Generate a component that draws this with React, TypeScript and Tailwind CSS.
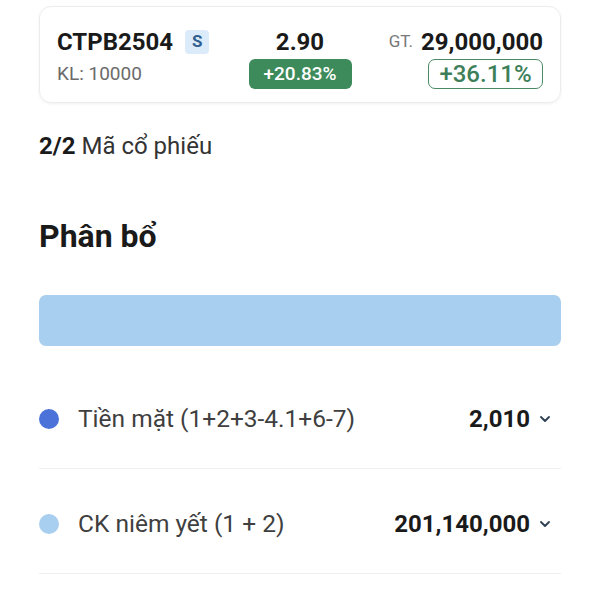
import React from "react";

const rows = [
  { label: "Tiền mặt (1+2+3-4.1+6-7)", value: "2,010", dot: "bg-[#4a72d8]" },
  { label: "CK niêm yết (1 + 2)", value: "201,140,000", dot: "bg-[#a9cff0]" },
];

function Chevron() {
  return (
    <svg width="12" height="8" viewBox="0 0 12 8" fill="none" className="ml-[9px] mr-[10px]">
      <path d="M2 2l4 4 4-4" stroke="#2c3e50" strokeWidth="1.8" strokeLinecap="round" strokeLinejoin="round" />
    </svg>
  );
}

export default function App() {
  return (
    <div className="w-[600px] h-[600px] bg-white overflow-hidden font-['Roboto',sans-serif] text-[#1a1a1a]">
      <div className="mx-[39px] mt-[6px] rounded-[12px] border border-[#ececec] shadow-[0_1px_3px_rgba(0,0,0,0.06)] px-[17px] pt-[22px] pb-[13px]">
        <div className="grid grid-cols-[1fr_auto_1fr] items-start">
          <div className="flex flex-col">
            <div className="flex items-center h-[26px]">
              <span className="text-[24px] font-bold leading-none">CTPB2504</span>
              <span className="ml-[12px] w-[24px] h-[24px] rounded-[4px] bg-[#dcebf9] text-[#2f5f8f] text-[17px] font-bold flex items-center justify-center">S</span>
            </div>
            <div className="mt-[4px] h-[30px] flex items-center text-[19px] text-[#6b6b6b]">KL: 10000</div>
          </div>
          <div className="flex flex-col items-center">
            <div className="h-[26px] flex items-center text-[24px] font-bold leading-none">2.90</div>
            <div className="mt-[4px] h-[30px] w-[103px] rounded-[6px] bg-[#3d8a5a] text-white text-[19px] font-medium flex items-center justify-center">+20.83%</div>
          </div>
          <div className="flex flex-col items-end">
            <div className="h-[26px] flex items-center">
              <span className="text-[17px] text-[#777]">GT.</span>
              <span className="ml-[8px] text-[24px] font-bold leading-none">29,000,000</span>
            </div>
            <div className="mt-[4px] h-[30px] w-[115px] rounded-[7px] border-[1.5px] border-[#4c8a66] text-[#3e7f5a] text-[24px] font-medium flex items-center justify-center">+36.11%</div>
          </div>
        </div>
      </div>

      <div className="px-[39px]">
        <div className="mt-[30px] h-[26px] flex items-center text-[24px] text-[#333]">
          <span className="font-bold text-[#1a1a1a]">2/2</span>
          <span className="ml-[6px]">Mã cổ phiếu</span>
        </div>

        <h2 className="mt-[60px] h-[34px] flex items-center text-[32px] font-bold">Phân bổ</h2>

        <div className="mt-[42px] h-[51px] rounded-[7px] bg-[#a9cff0]" />

        <div className="mt-[18px]">
          {rows.map((r) => (
            <div key={r.label} className="h-[105px] pt-[6px] flex items-center border-b border-[#efefef]">
              <span className={`w-[20px] h-[20px] rounded-full ${r.dot}`} />
              <span className="ml-[19px] text-[24.5px] text-[#3f3f3f]">{r.label}</span>
              <span className="ml-auto text-[24px] font-bold">{r.value}</span>
              <Chevron />
            </div>
          ))}
        </div>
      </div>
    </div>
  );
}
